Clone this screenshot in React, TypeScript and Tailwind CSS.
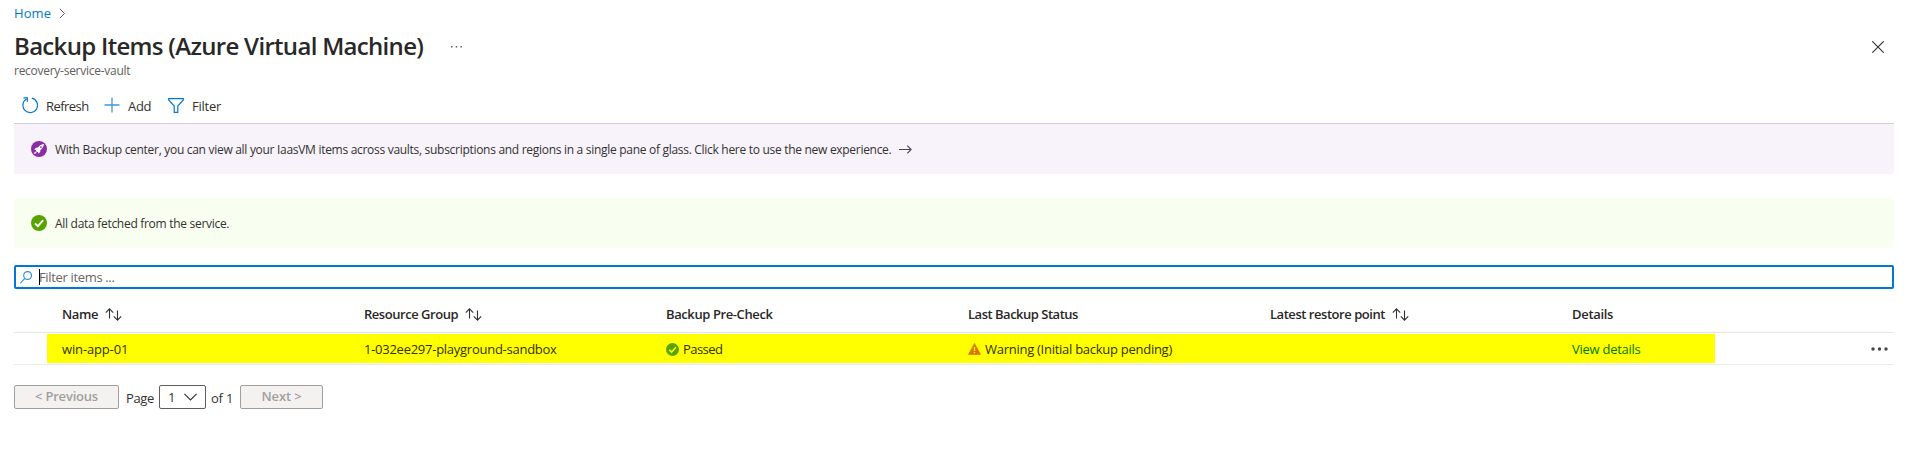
import type { ReactNode } from "react";

function SortIcon() {
  return (
    <svg width="17" height="13" viewBox="0 0 17 13" fill="none" stroke="#323130" strokeWidth="1.1" className="ml-[7px] shrink-0">
      <path d="M4.5 10.5V1M0.8 4.6L4.5 0.9L8.2 4.6" />
      <path d="M12.5 2.5V12M8.8 8.4L12.5 12.1L16.2 8.4" />
    </svg>
  );
}

function CheckCircle({ size, tick }: { size: number; tick: string }) {
  return (
    <svg width={size} height={size} viewBox="0 0 16 16" fill="none" className="shrink-0">
      <circle cx="8" cy="8" r="8" fill="#57a300" />
      <path d="M4 8.3L6.9 11.2L12.2 5.1" stroke={tick} strokeWidth="1.9" />
    </svg>
  );
}

function RocketIcon() {
  return (
    <svg width="16" height="16" viewBox="0 0 16 16" className="shrink-0">
      <circle cx="8" cy="8" r="8" fill="#8a2da5" />
      <path
        fill="#fff"
        d="M12.9 3.1C10.9 3.2 9.3 4 8 5.4L6.9 6.6L4.9 6.8L3.2 8.9L5.2 9L4.7 9.9L6.1 11.3L7 10.8L7.1 12.8L9.2 11.1L9.4 9.1L10.6 8C12 6.7 12.8 5.1 12.9 3.1Z"
      />
      <path fill="#fff" d="M4.3 10.4C3.5 10.9 3.2 11.9 3.1 12.9C4.1 12.8 5.1 12.5 5.6 11.7Z" />
      <circle cx="9.9" cy="6.1" r="0.9" fill="#8a2da5" />
    </svg>
  );
}

function WarningIcon() {
  return (
    <svg width="13" height="12" viewBox="0 0 13 12" className="shrink-0">
      <path d="M6.5 0.3L12.8 11.7H0.2Z" fill="#db7500" stroke="#db7500" strokeWidth="0.4" strokeLinejoin="round" />
      <path d="M5.8 3.9H7.2V8H5.8ZM5.8 9H7.2V10.3H5.8Z" fill="#ffff00" />
    </svg>
  );
}

function HeaderCell({ children, sortable }: { children: ReactNode; sortable?: boolean }) {
  return (
    <div className="flex w-[302px] items-center font-semibold whitespace-nowrap">
      {children}
      {sortable && <SortIcon />}
    </div>
  );
}

export default function App() {
  return (
    <div className="h-[450px] w-full overflow-hidden bg-white pr-[19px] pl-3.5 font-['Open_Sans','Noto_Sans',sans-serif] text-[13px] leading-5 text-[#323130]">
      <nav className="flex h-[26px] items-center">
        <a className="tracking-[0.1px] text-[#0078d4]">Home</a>
        <svg width="7" height="11" viewBox="0 0 7 11" fill="none" stroke="#605e5c" strokeWidth="1" className="mt-px ml-[8px]">
          <path d="M0.8 0.8L5.5 5.5L0.8 10.2" />
        </svg>
      </nav>

      <header>
        <div className="flex h-[38px] items-center">
          <h1 className="mt-[2px] w-[436px] text-2xl leading-[38px] font-semibold tracking-[-0.69px] whitespace-nowrap text-[#292827]">
            Backup Items (Azure Virtual Machine)
          </h1>
          <svg width="13" height="2" viewBox="0 0 13 2" fill="#605e5c" className="mt-1">
            <path d="M1 0H2.5V1.5H1ZM5.7 0H7.2V1.5H5.7ZM10.4 0H11.9V1.5H10.4Z" />
          </svg>
          <svg width="12" height="12" viewBox="0 0 12 12" stroke="#323130" strokeWidth="1.1" className="mt-[4px] mr-[10px] ml-auto">
            <path d="M0.3 0.3L11.7 11.7M11.7 0.3L0.3 11.7" />
          </svg>
        </div>
        <div className="h-[13px] text-xs leading-[13px] tracking-[-0.27px] text-[#605e5c]">recovery-service-vault</div>
      </header>

      <div className="flex h-[47px] items-center border-b border-[#d2d0d6] pt-3 pl-2">
        <svg width="16" height="17" viewBox="0 0 16 17" fill="none" stroke="#0078d4" strokeWidth="1.2" className="-mt-0.5">
          <path d="M9.8 1.2A7.3 7.3 0 1 1 4.4 2.1" />
          <path d="M1.5 0.9H5.4V4.8" />
        </svg>
        <span className="ml-2 w-[58px] tracking-[-0.55px]">Refresh</span>
        <svg width="16" height="16" viewBox="0 0 16 16" stroke="#3e97dc" strokeWidth="1.3" className="-mt-0.5">
          <path d="M8 0.5V15.5M0.5 8H15.5" />
        </svg>
        <span className="ml-2 w-[40px] tracking-[-0.3px]">Add</span>
        <svg width="16" height="15" viewBox="0 0 16 15" fill="none" stroke="#0078d4" strokeWidth="1.2" className="-mt-0.5">
          <path d="M0.7 0.7H15.3V2L9.8 8V14.3H6.2V8L0.7 2Z" />
        </svg>
        <span className="ml-[8px] tracking-[-0.25px]">Filter</span>
      </div>

      <div className="flex h-[50px] items-center rounded-b-xs bg-[#f8f3fb] pl-[17px]">
        <RocketIcon />
        <span className="mt-px ml-2 text-xs leading-[17px] tracking-[-0.294px]">
          With Backup center, you can view all your IaasVM items across vaults, subscriptions and regions in a single pane of glass. Click here to use the new experience.
        </span>
        <svg width="13" height="9" viewBox="0 0 13 9" fill="none" stroke="#484644" strokeWidth="1.1" className="ml-[8px]">
          <path d="M0 4.5H12M8.3 0.7L12.1 4.5L8.3 8.3" />
        </svg>
      </div>

      <div className="mt-6 flex h-[50px] items-center rounded-xs bg-[#f8fff0] pl-[17px]">
        <CheckCircle size={16} tick="#ffffff" />
        <span className="mt-px ml-2 text-xs leading-[17px] tracking-[-0.29px]">All data fetched from the service.</span>
      </div>

      <div className="mt-[17px] flex h-6 items-center rounded-xs border-2 border-[#0078d4] pl-1">
        <svg width="12" height="13" viewBox="0 0 12 13" fill="none" stroke="#2b8bd9" strokeWidth="1.1">
          <circle cx="7.6" cy="4.5" r="3.9" />
          <path d="M4.9 7.4L0.3 12.2" />
        </svg>
        <span className="ml-[7px] h-4 w-px bg-black" />
        <span className="-ml-px tracking-[-0.34px] text-[#696765]">Filter items ...</span>
      </div>

      <div className="flex h-[44px] items-center border-b border-[#e6e5e4] pt-[7px] pl-12 text-[#292827]">
        <HeaderCell sortable><span className="tracking-[-0.4px]">Name</span></HeaderCell>
        <HeaderCell sortable><span className="tracking-[-0.46px]">Resource Group</span></HeaderCell>
        <HeaderCell><span className="tracking-[-0.4px]">Backup Pre-Check</span></HeaderCell>
        <HeaderCell><span className="tracking-[-0.49px]">Last Backup Status</span></HeaderCell>
        <HeaderCell sortable><span className="tracking-[-0.46px]">Latest restore point</span></HeaderCell>
        <HeaderCell><span className="tracking-[-0.31px]">Details</span></HeaderCell>
      </div>

      <div className="flex h-8 items-center border-b border-[#edebe9] pl-[33px]">
        <div className="flex h-[29px] w-[1668px] items-center bg-[#ffff00] pt-px pl-[15px] whitespace-nowrap text-[#323100]">
          <div className="w-[302px] tracking-[-0.15px]">win-app-01</div>
          <div className="w-[302px] tracking-[-0.26px]">1-032ee297-playground-sandbox</div>
          <div className="flex w-[302px] items-center">
            <CheckCircle size={13} tick="#ffff00" />
            <span className="ml-1 tracking-[-0.55px]">Passed</span>
          </div>
          <div className="flex w-[302px] items-center">
            <WarningIcon />
            <span className="ml-1 tracking-[-0.27px]">Warning (Initial backup pending)</span>
          </div>
          <div className="w-[302px]" />
          <a className="tracking-[-0.26px] text-[#007800]">View details</a>
        </div>
        <svg width="17" height="4" viewBox="0 0 17 4" fill="#484644" className="mr-[6px] ml-auto">
          <circle cx="2" cy="2" r="1.7" />
          <circle cx="8.5" cy="2" r="1.7" />
          <circle cx="15" cy="2" r="1.7" />
        </svg>
      </div>

      <div className="mt-5 flex h-6 items-center">
        <button className="flex h-6 w-[105px] items-center justify-center rounded-xs border border-[#a19f9d] bg-[#f3f2f1] pb-0.5 font-semibold tracking-[-0.2px] text-[#a19f9d]">
          &lt; Previous
        </button>
        <span className="mt-0.5 ml-[7px] w-[33px] tracking-[-0.35px]">Page</span>
        <button className="flex h-6 w-[47px] items-center rounded-xs border border-[#605e5c] pl-[8px]">
          1
          <svg width="13" height="8" viewBox="0 0 13 8" fill="none" stroke="#323130" strokeWidth="1.1" className="ml-[9px]">
            <path d="M0.4 0.8L6.5 6.9L12.6 0.8" />
          </svg>
        </button>
        <span className="mt-0.5 ml-[5px] w-[29px] tracking-[-0.2px]">of 1</span>
        <button className="flex h-6 w-[83px] items-center justify-center rounded-xs border border-[#a19f9d] bg-[#f3f2f1] pb-0.5 font-semibold tracking-[-0.15px] text-[#a19f9d]">
          Next &gt;
        </button>
      </div>
    </div>
  );
}
